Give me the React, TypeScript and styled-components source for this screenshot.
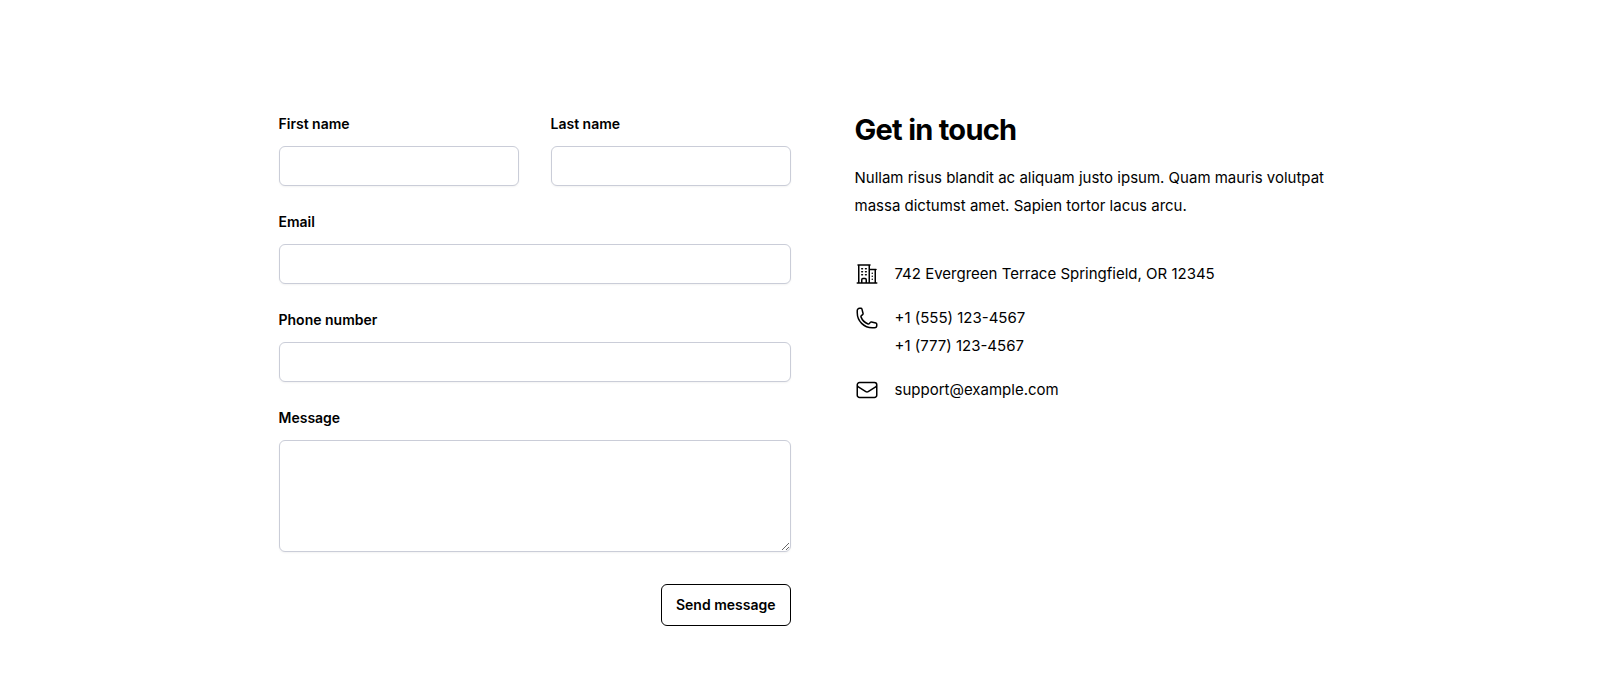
import React from "react";
import styled, { createGlobalStyle } from "styled-components";

const GlobalStyle = createGlobalStyle`
  *, *::before, *::after { box-sizing: border-box; }
  body {
    margin: 0;
    background: #fff;
    color: #000;
    font-family: Inter, "Liberation Sans", sans-serif;
    font-size: 15px;
    line-height: 28px;
    -webkit-font-smoothing: antialiased;
  }
`;

const Section = styled.main`
  display: grid;
  grid-template-columns: minmax(0, 512px) minmax(0, 490px);
  justify-content: center;
  gap: 64px;
  padding: 112px 24px 74px;

  @media (max-width: 800px) {
    grid-template-columns: minmax(0, 1fr);
    padding: 64px 24px;
  }
`;

const Form = styled.form`
  display: grid;
  grid-template-columns: repeat(2, minmax(0, 1fr));
  gap: 24px 32px;
`;

const Field = styled.div<{ $wide?: boolean }>`
  display: flex;
  flex-direction: column;
  gap: 10px;
  grid-column: ${({ $wide }) => ($wide ? "1 / -1" : "auto")};
`;

const Label = styled.label`
  font-size: 14px;
  font-weight: 600;
  line-height: 24px;
`;

const Input = styled.input`
  display: block;
  width: 100%;
  height: 40px;
  padding: 8px 14px;
  border: 1px solid #cacdd8;
  border-radius: 6px;
  background: #fff;
  box-shadow: 0 1px 2px rgba(0, 0, 0, 0.05);
  font: inherit;
  line-height: 24px;
`;

const TextArea = styled(Input)`
  height: 112px;
  resize: vertical;
`;

const Actions = styled.div`
  display: flex;
  justify-content: flex-end;
  grid-column: 1 / -1;
  padding-top: 8px;
`;

const Button = styled.button`
  padding: 10px 14px;
  border: 1px solid #000;
  border-radius: 6px;
  background: #fff;
  color: #000;
  font: inherit;
  font-size: 14px;
  font-weight: 600;
  line-height: 20px;
  cursor: pointer;
`;

const Heading = styled.h2`
  margin: 0;
  font-size: 29px;
  font-weight: 700;
  line-height: 36px;
  letter-spacing: -0.025em;
`;

const Intro = styled.p`
  margin: 16px 0 40px;
`;

const ContactList = styled.ul`
  display: flex;
  flex-direction: column;
  gap: 16px;
  margin: 0;
  padding: 0;
  list-style: none;
`;

const ContactItem = styled.li`
  display: flex;
  gap: 16px;
`;

const Icon = styled.svg`
  flex: none;
  width: 24px;
  height: 28px;
  fill: none;
  stroke: currentColor;
  stroke-width: 1.5;
  stroke-linecap: round;
  stroke-linejoin: round;
`;

const ContactLink = styled.a`
  display: block;
  color: inherit;
  text-decoration: none;
`;

const BUILDING =
  "M2.25 21h19.5m-18-18v18m10.5-18v18m6-13.5V21M6.75 6.75h.75m-.75 3h.75m-.75 3h.75m3-6h.75m-.75 3h.75m-.75 3h.75M6.75 21v-3.375c0-.621.504-1.125 1.125-1.125h2.25c.621 0 1.125.504 1.125 1.125V21M3 3h12m-.75 4.5H21m-3.75 3.75h.008v.008h-.008v-.008zm0 3h.008v.008h-.008v-.008zm0 3h.008v.008h-.008v-.008z";
const PHONE =
  "M2.25 6.75c0 8.284 6.716 15 15 15h2.25a2.25 2.25 0 002.25-2.25v-1.372c0-.516-.351-.966-.852-1.091l-4.423-1.106c-.44-.11-.902.055-1.173.417l-.97 1.293c-.282.376-.769.542-1.21.38a12.035 12.035 0 01-7.143-7.143c-.162-.441.004-.928.38-1.21l1.293-.97c.363-.271.527-.734.417-1.173L6.963 3.102a1.125 1.125 0 00-1.091-.852H4.5A2.25 2.25 0 002.25 4.5v2.25z";
const ENVELOPE =
  "M21.75 6.75v10.5a2.25 2.25 0 01-2.25 2.25h-15a2.25 2.25 0 01-2.25-2.25V6.75m19.5 0A2.25 2.25 0 0019.5 4.5h-15a2.25 2.25 0 00-2.25 2.25m19.5 0v.243a2.25 2.25 0 01-1.07 1.916l-7.5 4.615a2.25 2.25 0 01-2.36 0L3.32 8.91a2.25 2.25 0 01-1.07-1.916V6.75";

function Glyph({ d }: { d: string }) {
  return (
    <Icon viewBox="0 0 24 24" aria-hidden="true">
      <path d={d} />
    </Icon>
  );
}

export default function App() {
  return (
    <>
      <GlobalStyle />
      <Section>
        <Form onSubmit={(event) => event.preventDefault()}>
          <Field>
            <Label htmlFor="first-name">First name</Label>
            <Input id="first-name" type="text" autoComplete="given-name" />
          </Field>
          <Field>
            <Label htmlFor="last-name">Last name</Label>
            <Input id="last-name" type="text" autoComplete="family-name" />
          </Field>
          <Field $wide>
            <Label htmlFor="email">Email</Label>
            <Input id="email" type="email" autoComplete="email" />
          </Field>
          <Field $wide>
            <Label htmlFor="phone">Phone number</Label>
            <Input id="phone" type="tel" autoComplete="tel" />
          </Field>
          <Field $wide>
            <Label htmlFor="message">Message</Label>
            <TextArea as="textarea" id="message" />
          </Field>
          <Actions>
            <Button type="submit">Send message</Button>
          </Actions>
        </Form>
        <section>
          <Heading>Get in touch</Heading>
          <Intro>
            Nullam risus blandit ac aliquam justo ipsum. Quam mauris volutpat massa dictumst amet.
            Sapien tortor lacus arcu.
          </Intro>
          <ContactList>
            <ContactItem>
              <Glyph d={BUILDING} />
              <span>742 Evergreen Terrace Springfield, OR 12345</span>
            </ContactItem>
            <ContactItem>
              <Glyph d={PHONE} />
              <div>
                <ContactLink href="tel:+15551234567">+1 (555) 123-4567</ContactLink>
                <ContactLink href="tel:+17771234567">+1 (777) 123-4567</ContactLink>
              </div>
            </ContactItem>
            <ContactItem>
              <Glyph d={ENVELOPE} />
              <ContactLink href="mailto:support@example.com">support@example.com</ContactLink>
            </ContactItem>
          </ContactList>
        </section>
      </Section>
    </>
  );
}
